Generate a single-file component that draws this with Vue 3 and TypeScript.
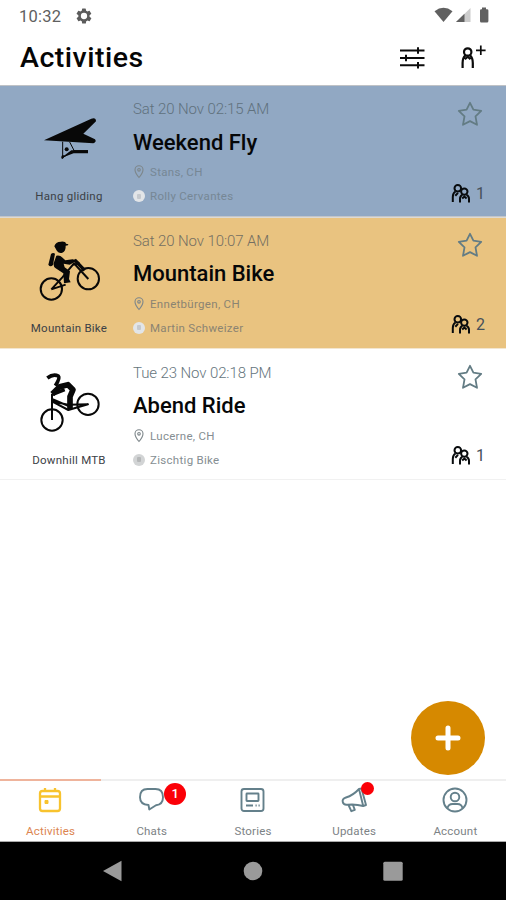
<script setup lang="ts">
interface Activity {
  kind: 'glide' | 'mountain' | 'downhill'
  sport: string
  date: string
  title: string
  place: string
  host: string
  people: number
}

const activities: Activity[] = [
  { kind: 'glide', sport: 'Hang gliding', date: 'Sat 20 Nov 02:15 AM', title: 'Weekend Fly', place: 'Stans, CH', host: 'Rolly Cervantes', people: 1 },
  { kind: 'mountain', sport: 'Mountain Bike', date: 'Sat 20 Nov 10:07 AM', title: 'Mountain Bike', place: 'Ennetbürgen, CH', host: 'Martin Schweizer', people: 2 },
  { kind: 'downhill', sport: 'Downhill MTB', date: 'Tue 23 Nov 02:18 PM', title: 'Abend Ride', place: 'Lucerne, CH', host: 'Zischtig Bike', people: 1 },
]
</script>

<template>
  <div class="screen">
    <div class="status">
      <span class="clock">10:32</span>
      <svg class="gear" viewBox="0 0 24 24" width="18" height="18"><path fill-rule="evenodd" d="M19.4 13a7.8 7.8 0 0 0 0-2l2.1-1.6a.5.5 0 0 0 .1-.7l-2-3.4a.5.5 0 0 0-.6-.2l-2.5 1a7.300 7.300 0 0 0-1.700-1l-.4-2.600a.5.5 0 0 0-.5-.5h-4a.5.5 0 0 0-.5.5l-.4 2.600a7.300 7.300 0 0 0-1.700 1l-2.500-1a.5.5 0 0 0-.6.2l-2 3.400a.5.5 0 0 0 .1.7L4.500 11a7.800 7.800 0 0 0 0 2l-2.100 1.600a.5.5 0 0 0-.1.7l2 3.400c.1.2.4.3.6.2l2.500-1a7.300 7.300 0 0 0 1.700 1l.4 2.600c0 .3.200.5.500.5h4c.3 0 .5-.2.5-.5l.4-2.600a7.300 7.300 0 0 0 1.700-1l2.500 1c.2.1.5 0 .6-.2l2-3.400a.5.5 0 0 0-.1-.7zM12 16.200a4.200 4.200 0 1 1 0-8.400 4.200 4.200 0 0 1 0 8.400z" /></svg>
      <svg class="signals" viewBox="0 0 58 18" width="58" height="18">
        <path d="M.5 4.200Q9.500-2.500 18.500 4.200L9.500 15z" fill="#606060" />
        <path d="M22 15L36.500 1V15z" fill="#ccc" /><path d="M22 15l8.500-8.300V15z" fill="#606060" />
        <path d="M46 3.500q0-1.300 1.300-1.300H48V.5h4v1.700h1q1.400 0 1.400 1.300V14q0 1.500-1.400 1.500h-5.700Q46 15.500 46 14z" fill="#606060" />
      </svg>
    </div>

    <header class="header">
      <h1>Activities</h1>
      <svg class="filter" viewBox="0 0 26 24" width="26" height="24"><path d="M1 4.500h24.500M1 12h24.500M1 19.300h24.500M19 1.300v6.400M7 8.800v6.400M19 16.100v6.400" /></svg>
      <svg class="invite" viewBox="0 0 26 24" width="26" height="24">
        <circle cx="7.700" cy="6" r="3.700" /><path d="M2.600 22v-5Q2.600 11.500 5.400 9.300M12.800 22v-5Q12.800 11.500 10 9.300M4.900 13.300l2.800-2.500 2.800 2.500" /><path d="M20.800-.5v9.600M16 4.300h9.600" class="fine" />
      </svg>
    </header>

    <main class="list">
      <article v-for="a in activities" :key="a.title" class="card" :class="a.kind">
        <div class="sport">
          <svg v-if="a.kind === 'glide'" viewBox="42 12 210 210" width="70" height="70">
            <path d="M72 121L214 56Q228 51 228 64L190 101l35 17q6 8-5 12z" />
            <path d="M128 125v48M149 126l14 27M128 173l34-21h42" class="thin" /><path d="M126 166h8l20-15h50v9h-43l-28 10-5 7q-6-1-4-7z" /><circle cx="140" cy="148" r="6" />
          </svg>
          <svg v-else-if="a.kind === 'mountain'" viewBox="42 17 210 210" width="70" height="70">
            <circle cx="94" cy="176" r="32" class="wheel" /><circle cx="205" cy="145" r="32" class="wheel" />
            <path d="M103 48q3-14 20-14 14-1 15 6l7 2-1 3-7 1q1 16-10 21-10 3-16-5z" />
            <path d="M93 71q6-6 12-1l-6 34q-8 8-14-1zM109 76q12-2 17 5l10 9 22-3q8 1 6 8l-15 8-18-3 3 11 16 12-3 23 5 10-20 3-2-30-23-15q-9-7-5-18z" />
            <path d="M94 177l33-36 35-42 43 47M163 88l14 11-20 5M94 177l43-14" class="frame" />
            <path d="M164 89l30 31" class="limb" />
          </svg>
          <svg v-else viewBox="42 16 210 210" width="70" height="70">
            <circle cx="96" cy="175" r="32" class="wheel" /><circle cx="204" cy="128" r="32" class="wheel" />
            <path d="M82 49Q100 35 115 43Q121 49 106 72" class="helmet" />
            <path d="M97 97L119 75L144 69L159 84L150 105V142" class="body" />
            <path d="M98 98L134 84" class="limb" />
            <path d="M96 96v79M96 112l52 22M96 119l49 26 59-17-60 1z" class="frame" />
          </svg>
          <span>{{ a.sport }}</span>
        </div>
        <div class="info">
          <div class="date">{{ a.date }}</div>
          <h2>{{ a.title }}</h2>
          <div class="meta place">
            <svg viewBox="0 0 12 14" width="12" height="14"><path d="M6 12.500Q2 8 2 4.800a4 4 0 0 1 8 0Q10 8 6 12.500z" /><circle cx="6" cy="4.800" r="1.300" /></svg>
            <span>{{ a.place }}</span>
          </div>
          <div class="meta host">
            <span class="avatar"><i /></span>
            <span>{{ a.host }}</span>
          </div>
        </div>
        <div class="side">
          <svg class="star" viewBox="0 0 26 26" width="26" height="26"><path d="M13 1.800l3.400 6.900 7.800 1.100-5.700 5.500 1.500 8.500-7-3.700-7 3.700 1.500-8.500L1.800 9.800l7.800-1.100z" /></svg>
          <div class="people">
            <svg viewBox="0 0 20 20" width="20" height="20"><circle cx="6.800" cy="4.300" r="3.300" /><path d="M1.800 18v-5Q1.800 9 4.500 7.500M4.300 11.700l2.700-2.800" /><circle cx="13.300" cy="7.600" r="3.200" /><path d="M9 18.500v-3.800q0-2.700 2.300-3.900M18 18.500v-3.800q0-2.700-2.500-3.900M11.200 14.500l2.200-2 2.200 2" /></svg>
            <span>{{ a.people }}</span>
          </div>
        </div>
      </article>
    </main>

    <button class="fab" aria-label="+"><svg viewBox="0 0 26 26" width="26" height="26"><path d="M13 3v20M3 13h20" /></svg></button>

    <nav class="tabs">
      <div class="tab active">
        <svg viewBox="0 0 26 26" width="26" height="26"><rect x="2" y="4" width="20" height="20" rx="2.500" /><path d="M2 9.500h20M7 1v4M17 1v4" /><rect x="7" y="13.500" width="3" height="3" class="dot" /></svg>
        <span>Activities</span>
      </div>
      <div class="tab">
        <svg viewBox="0 0 26 26" width="26" height="26"><path d="M8.500 2h8q7.500 0 7.500 8.200 0 7.200-7 8.100L10.300 22.500l-.8-4.500Q1 17.500 1 10.200 1 2 8.500 2z" /></svg>
        <b class="badge">1</b>
        <span>Chats</span>
      </div>
      <div class="tab">
        <svg viewBox="0 0 26 26" width="26" height="26"><rect x="1.500" y="2" width="22" height="22" rx="2.500" /><rect x="6.500" y="6.500" width="12" height="7.500" rx=".5" /><path d="M6 18.500h7M15.500 18.500h1.200M18.500 18.500h1.200" /></svg>
        <span>Stories</span>
      </div>
      <div class="tab">
        <svg viewBox="0 0 26 26" width="26" height="26"><path d="M18 2Q12 8.500 5 10.500q-4 1.300-3.300 4.300.8 3.500 4.800 2.900 8-.9 15.700 1.300zM18 2l2.500-.5 4.500 16.500-2.800 1M7.500 18l2.800 6.200 3.500-1.400-1.800-4.600" /></svg>
        <b class="badge small" />
        <span>Updates</span>
      </div>
      <div class="tab">
        <svg viewBox="0 0 26 26" width="26" height="26"><circle cx="13" cy="13" r="11.500" /><circle cx="13" cy="10" r="4.300" /><path d="M5.500 21q1-4 5-4h5q4 0 5 4" /></svg>
        <span>Account</span>
      </div>
    </nav>

    <div class="system">
      <svg viewBox="0 0 22 22" width="22" height="22"><path d="M1 11L19.500 .8v20.400z" /></svg>
      <svg viewBox="0 0 22 22" width="22" height="22"><circle cx="11" cy="11" r="9.300" /></svg>
      <svg viewBox="0 0 22 22" width="22" height="22"><rect x="1.300" y="1.800" width="19.400" height="19" rx="1.500" /></svg>
    </div>
  </div>
</template>

<style>
body { margin: 0; background: #fff; }
</style>

<style scoped>
* { box-sizing: border-box; }
svg { display: block; flex: none; overflow: visible; }
.screen { position: relative; display: flex; flex-direction: column; width: 506px; height: 900px; overflow: hidden; background: #fff; font-family: Roboto, "Liberation Sans", sans-serif; }
.status { display: flex; align-items: center; height: 32px; padding: 0 14px 0 19px; }
.clock { font-size: 16.500px; color: #606060; width: 56px; letter-spacing: .25px; }
.gear { fill: #5c5c5c; }
.signals { margin-left: auto; }
.header { display: flex; align-items: center; height: 53px; padding: 0 20px 2px; }
h1 { margin: 0 auto 0 0; font-size: 28.500px; line-height: 34px; font-weight: 500; color: #050505; letter-spacing: .5px; }
.filter, .invite { fill: none; stroke: #0c0c0c; stroke-width: 2; }
.filter { margin-right: 35.500px; }
.invite { stroke-width: 2.200; }
.fine { stroke-width: 1.700; }
.list { flex: 1; }
.card { display: flex; height: 131.670px; border-top: 1px solid #f3e6d0; }
.card.glide { background: #91a8c3; border-top-color: #bfc2c6; }
.card.mountain { background: #e9c380; border-top-color: #dcdad5; }
.card.glide { border-bottom: 1px solid #c3c5c8; }
.card.downhill { border-bottom: 1px solid #f1f1f1; }
.sport { display: flex; flex-direction: column; align-items: center; width: 138px; padding-top: 18px; }
.sport span { margin-top: 14.300px; font-size: 11.500px; line-height: 16px; color: #3c4146; letter-spacing: .25px; }
.sport { fill: #080808; }
.wheel, .frame, .thin, .limb, .body, .helmet { fill: none; stroke: #080808; stroke-width: 6; }
.thin { stroke-width: 3; }
.frame { stroke-linejoin: round; }
.limb { stroke-width: 10; }
.helmet { stroke-width: 11; stroke-linejoin: round; }
.body { stroke-width: 17; stroke-linejoin: round; }
.info { flex: 1; margin-left: -5px; padding-top: 14.300px; }
.date { font-size: 15px; line-height: 19px; color: #65757c; font-weight: 300; letter-spacing: -.1px; }
h2 { margin: 10.300px 0 0; font-size: 22px; line-height: 26px; font-weight: 500; color: #060708; }
.meta { display: flex; align-items: center; height: 16px; font-size: 11.500px; letter-spacing: .3px; color: #858e92; }
.meta svg { width: 12px; margin-right: 5px; fill: none; stroke: #7d868a; stroke-width: 1.100; }
.place { margin-top: 8.700px; }
.host { margin-top: 8px; }
.glide .meta { color: #768795; }
.glide .date { color: #60717d; }
.mountain .meta { color: #8b8472; }
.mountain .date { color: #746f62; }
.avatar { display: grid; place-items: center; width: 12px; height: 12px; margin-right: 5px; border-radius: 50%; background: #e2e5e8; }
.avatar i { width: 4px; height: 5px; background: #c5c9ce; border-radius: 1px; }
.downhill .avatar { background: #d2d4d5; }
.downhill .avatar i { background: #b5b7b8; }
.side { display: flex; flex-direction: column; justify-content: space-between; align-items: flex-end; padding: 14.500px 21px 13px 0; }
.glide .side { padding-bottom: 12px; }
.star { fill: none; stroke: #637c84; stroke-width: 1.800; stroke-linejoin: round; margin-right: 2px; }
.people { display: flex; align-items: center; gap: 5px; font-size: 16px; line-height: 20px; color: #46505a; }
.people svg { fill: none; stroke: #080b0d; stroke-width: 2; }
.fab { position: absolute; left: 411px; top: 701px; display: grid; place-items: center; width: 74px; height: 74px; padding: 0; border: 0; border-radius: 50%; background: #d68900; z-index: 2; }
.fab path { stroke: #fff; stroke-width: 5; stroke-linecap: round; }
.tabs { display: grid; grid-template-columns: repeat(5, 1fr); height: 63px; border-bottom: 1px solid #aaa; }
.tab { position: relative; display: flex; flex-direction: column; align-items: center; padding-top: 6px; border-top: 2px solid #efefef; font-size: 11.500px; line-height: 14px; color: #7c8285; letter-spacing: .2px; }
.tab > span { margin-top: 11px; }
.tab svg { fill: none; stroke: #64808b; stroke-width: 1.900; stroke-linejoin: round; }
.tab.active { border-top-color: #efb49c; color: #dc8550; }
.tab.active svg { stroke: #f8c32e; stroke-width: 2.300; }
.tab .dot { fill: #f8c32e; stroke-width: 1; }
.badge { position: absolute; left: 63px; top: 2px; width: 22px; height: 22px; border-radius: 50%; background: #fb0007; color: #fff; font-size: 13px; line-height: 22px; font-weight: 500; text-align: center; letter-spacing: 0; }
.badge.small { left: 57px; top: 1px; width: 13px; height: 13px; }
.system { display: flex; justify-content: center; align-items: center; gap: 118px; height: 58px; background: #000; fill: #9a9a9a; }
</style>
